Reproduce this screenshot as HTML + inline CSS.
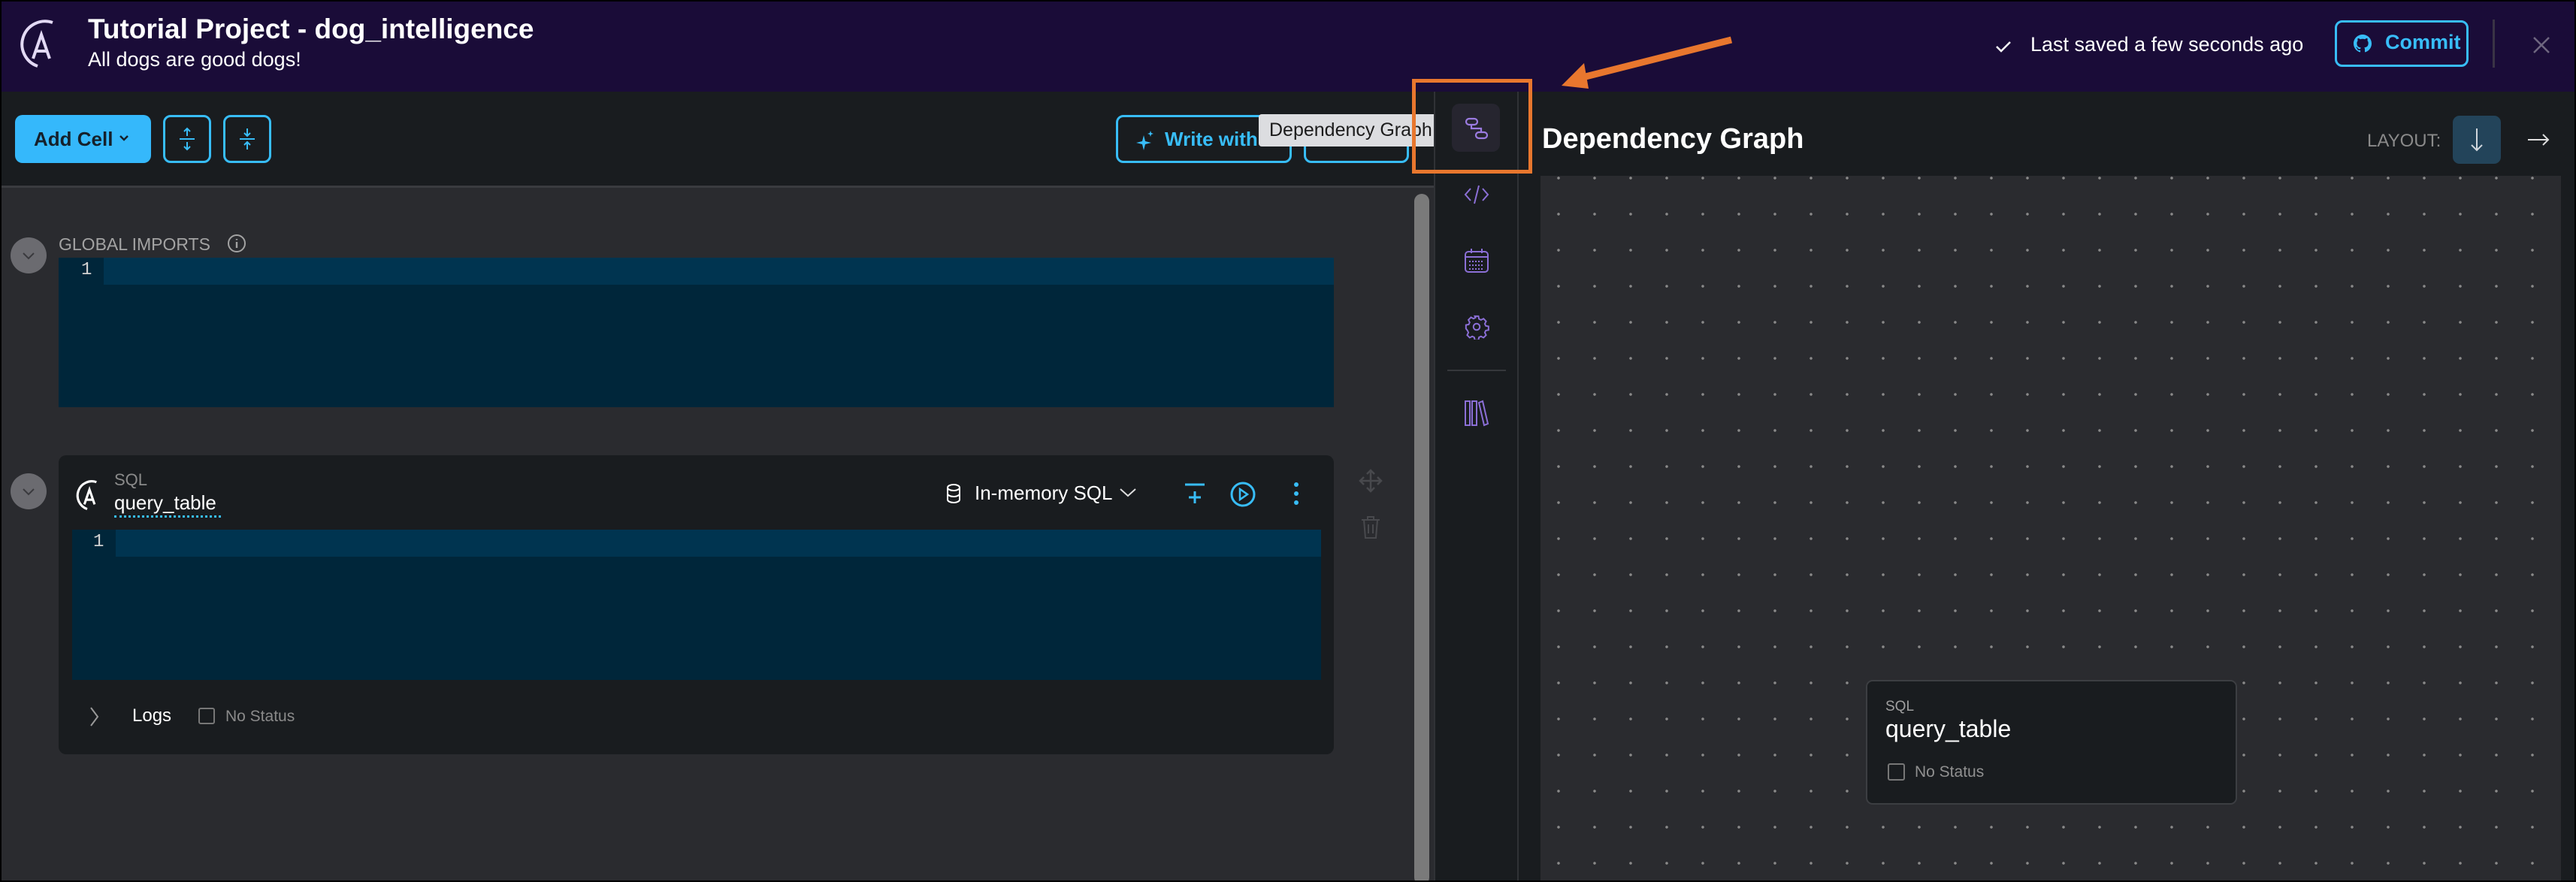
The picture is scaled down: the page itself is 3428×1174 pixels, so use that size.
<!DOCTYPE html>
<html><head><meta charset="utf-8"><style>
*{margin:0;padding:0;box-sizing:border-box}
html,body{width:3428px;height:1174px;overflow:hidden;background:#000;font-family:"Liberation Sans",sans-serif}
#root{position:absolute;left:2px;top:2px;width:3424px;height:1170px;background:#2a2b2f;overflow:hidden}
.a{position:absolute}
.t{position:absolute;white-space:nowrap}
</style></head><body>
<div id="root">
<!-- header -->
<div class="a" style="left:0;top:0;width:3424px;height:120px;background:#1a0c38"></div>
<svg class="a" style="left:20px;top:22px" width="56" height="68" viewBox="0 0 56 68">
<path d="M48 6 A28 28 0 1 0 28 64" fill="none" stroke="#e3d9f5" stroke-width="4"/>
<path d="M22 54 L33 22 L44 54 M25 44 L41 44" fill="none" stroke="#e3d9f5" stroke-width="4"/>
</svg>
<div class="t" style="left:115px;top:16px;font-size:37px;font-weight:bold;color:#fff">Tutorial Project - dog_intelligence</div>
<div class="t" style="left:115px;top:62px;font-size:27px;color:#fff">All dogs are good dogs!</div>
<svg class="a" style="left:2652px;top:50px" width="24" height="20"><path d="M3 10 L9 16 L21 4" fill="none" stroke="#fff" stroke-width="2.5"/></svg>
<div class="t" style="left:2700px;top:42px;font-size:27px;color:#fff">Last saved a few seconds ago</div>
<div class="a" style="left:3105px;top:25px;width:178px;height:62px;border:3px solid #38bdf8;border-radius:10px"></div>
<svg class="a" style="left:3130px;top:44px" width="24" height="24" viewBox="0 0 16 16"><path fill="#38bdf8" d="M8 0C3.58 0 0 3.58 0 8c0 3.54 2.29 6.53 5.47 7.59.4.07.55-.17.55-.38v-1.33c-2.23.48-2.7-1.07-2.7-1.07-.36-.92-.89-1.17-.89-1.17-.73-.5.06-.49.06-.49.8.06 1.23.83 1.23.83.72 1.23 1.88.87 2.34.67.07-.52.28-.87.51-1.07-1.78-.2-3.65-.89-3.65-3.95 0-.87.31-1.59.82-2.15-.08-.2-.36-1.02.08-2.12 0 0 .67-.21 2.2.82A7.6 7.6 0 0 1 8 3.86c.68 0 1.36.09 2 .27 1.53-1.04 2.2-.82 2.2-.82.44 1.1.16 1.92.08 2.12.51.56.82 1.27.82 2.15 0 3.07-1.87 3.75-3.65 3.95.29.25.54.73.54 1.48v2.2c0 .21.15.46.55.38A8 8 0 0 0 16 8c0-4.42-3.58-8-8-8z"/></svg>
<div class="t" style="left:3172px;top:39px;font-size:27px;font-weight:bold;color:#38bdf8">Commit</div>
<div class="a" style="left:3315px;top:24px;width:3px;height:64px;background:#3a3445"></div>
<svg class="a" style="left:3364px;top:42px" width="32" height="32"><path d="M6 6 L26 26 M26 6 L6 26" stroke="#6e6680" stroke-width="2.5"/></svg>

<!-- toolbar -->
<div class="a" style="left:0;top:120px;width:1906px;height:125px;background:#191c1f"></div>
<div class="a" style="left:0;top:245px;width:1906px;height:3px;background:#3a3b3f"></div>
<div class="a" style="left:18px;top:151px;width:181px;height:64px;background:#35b8fb;border-radius:10px"></div>
<div class="t" style="left:43px;top:168px;font-size:26px;font-weight:bold;color:#15202b">Add Cell</div>
<svg class="a" style="left:155px;top:176px" width="16" height="12"><path d="M3 3 L8 8 L13 3" fill="none" stroke="#15202b" stroke-width="2.5"/></svg>
<div class="a" style="left:215px;top:151px;width:64px;height:64px;border:3px solid #38bdf8;border-radius:10px"></div>
<svg class="a" style="left:215px;top:151px" width="64" height="64"><path d="M22 32 H42 M32 18 V28 M28 22 L32 18 L36 22 M32 36 V46 M28 42 L32 46 L36 42" fill="none" stroke="#38bdf8" stroke-width="2"/></svg>
<div class="a" style="left:295px;top:151px;width:64px;height:64px;border:3px solid #38bdf8;border-radius:10px"></div>
<svg class="a" style="left:295px;top:151px" width="64" height="64"><path d="M22 32 H42 M32 18 V28 M28 24 L32 28 L36 24 M32 36 V46 M28 40 L32 36 L36 40" fill="none" stroke="#38bdf8" stroke-width="2"/></svg>
<div class="a" style="left:1483px;top:151px;width:234px;height:64px;border:3px solid #38bdf8;border-radius:10px"></div>
<svg class="a" style="left:1508px;top:170px" width="28" height="30"><path d="M12 8 L14 16 L22 18 L14 20 L12 28 L10 20 L2 18 L10 16Z M21 2 L22 5 L25 6 L22 7 L21 10 L20 7 L17 6 L20 5Z" fill="#38bdf8"/></svg>
<div class="t" style="left:1548px;top:168px;font-size:26px;font-weight:bold;color:#38bdf8">Write with AI</div>
<div class="a" style="left:1733px;top:151px;width:140px;height:64px;border:3px solid #38bdf8;border-radius:10px"></div>
<!-- tooltip -->
<div class="a" style="left:1673px;top:150px;width:244px;height:43px;background:#dcdde0;border-radius:4px"></div>
<div class="a" style="left:1916px;top:157px;width:0;height:0;border-top:14px solid transparent;border-bottom:14px solid transparent;border-left:15px solid #dcdde0"></div>
<div class="t" style="left:1687px;top:157px;font-size:25px;color:#1c1c1c">Dependency Graph</div>

<!-- notebook -->
<div class="a" style="left:1880px;top:256px;width:20px;height:920px;background:#7a7a7a;border-radius:10px"></div>
<div class="a" style="left:12px;top:314px;width:48px;height:48px;background:#6b6b70;border-radius:50%"></div>
<svg class="a" style="left:12px;top:314px" width="48" height="48"><path d="M17 21 L24 28 L31 21" fill="none" stroke="#3a3a3e" stroke-width="2"/></svg>
<div class="t" style="left:76px;top:310px;font-size:23px;color:#a3a3a3">GLOBAL IMPORTS</div>
<svg class="a" style="left:300px;top:309px" width="26" height="26"><circle cx="13" cy="13" r="11" fill="none" stroke="#a3a3a3" stroke-width="2"/><path d="M13 11 V19 M13 7 V8.5" stroke="#a3a3a3" stroke-width="2.4"/></svg>
<div class="a" style="left:76px;top:341px;width:1697px;height:199px;background:#00263a"></div>
<div class="a" style="left:136px;top:341px;width:1637px;height:36px;background:#003450"></div>
<div class="t" style="left:106px;top:344px;font-size:24px;color:#d0d0d0;font-family:'Liberation Mono',monospace">1</div>

<div class="a" style="left:12px;top:628px;width:48px;height:48px;background:#6b6b70;border-radius:50%"></div>
<svg class="a" style="left:12px;top:628px" width="48" height="48"><path d="M17 21 L24 28 L31 21" fill="none" stroke="#3a3a3e" stroke-width="2"/></svg>
<div class="a" style="left:76px;top:604px;width:1697px;height:398px;background:#191c1f;border-radius:10px"></div>
<svg class="a" style="left:94px;top:636px" width="40" height="42" viewBox="0 0 56 68"><path d="M48 6 A28 28 0 1 0 28 64" fill="none" stroke="#fff" stroke-width="5"/><path d="M22 54 L33 22 L44 54 M25 44 L41 44" fill="none" stroke="#fff" stroke-width="5"/></svg>
<div class="t" style="left:150px;top:624px;font-size:22px;color:#8a8a8a">SQL</div>
<div class="t" style="left:150px;top:652px;font-size:26px;color:#fff">query_table</div>
<div class="a" style="left:150px;top:684px;width:142px;border-top:3px dotted #38bdf8"></div>
<svg class="a" style="left:1254px;top:641px" width="26" height="28"><ellipse cx="13" cy="6" rx="8" ry="4" fill="none" stroke="#fff" stroke-width="2"/><path d="M5 6 V22 A8 4 0 0 0 21 22 V6 M5 14 A8 4 0 0 0 21 14" fill="none" stroke="#fff" stroke-width="2"/></svg>
<div class="t" style="left:1295px;top:639px;font-size:26px;color:#fff">In-memory SQL</div>
<svg class="a" style="left:1486px;top:646px" width="26" height="16"><path d="M3 3 L13 12 L23 3" fill="none" stroke="#ddd" stroke-width="2"/></svg>
<svg class="a" style="left:1572px;top:640px" width="32" height="30"><path d="M3 3 H29 M16 12 V28 M8 20 H24" stroke="#38bdf8" stroke-width="3"/></svg>
<svg class="a" style="left:1634px;top:638px" width="36" height="36"><circle cx="18" cy="18" r="15" fill="none" stroke="#38bdf8" stroke-width="3"/><path d="M14 11 L24 18 L14 25Z" fill="none" stroke="#38bdf8" stroke-width="2.5"/></svg>
<svg class="a" style="left:1716px;top:638px" width="14" height="36"><circle cx="7" cy="5" r="3" fill="#38bdf8"/><circle cx="7" cy="17" r="3" fill="#38bdf8"/><circle cx="7" cy="29" r="3" fill="#38bdf8"/></svg>
<div class="a" style="left:94px;top:703px;width:1662px;height:200px;background:#00263a"></div>
<div class="a" style="left:152px;top:703px;width:1604px;height:36px;background:#003450"></div>
<div class="t" style="left:122px;top:706px;font-size:24px;color:#d0d0d0;font-family:'Liberation Mono',monospace">1</div>
<svg class="a" style="left:116px;top:938px" width="16" height="28"><path d="M3 2 L12 14 L3 26" fill="none" stroke="#999" stroke-width="2"/></svg>
<div class="t" style="left:174px;top:937px;font-size:24px;color:#fff">Logs</div>
<div class="a" style="left:262px;top:940px;width:22px;height:22px;border:2px solid #777;border-radius:3px"></div>
<div class="t" style="left:298px;top:940px;font-size:21px;color:#8a8a8a">No Status</div>
<svg class="a" style="left:1806px;top:622px" width="32" height="32"><path d="M16 2 V30 M2 16 H30 M11 7 L16 2 L21 7 M11 25 L16 30 L21 25 M7 11 L2 16 L7 21 M25 11 L30 16 L25 21" fill="none" stroke="#48494d" stroke-width="2.5"/></svg>
<svg class="a" style="left:1808px;top:684px" width="28" height="32"><path d="M2 6 H26 M10 6 V2 H18 V6 M5 6 L7 30 H21 L23 6 M11 12 V24 M17 12 V24" fill="none" stroke="#48494d" stroke-width="2"/></svg>

<!-- sidebar -->
<div class="a" style="left:1906px;top:120px;width:113px;height:1054px;background:#191c1f;border-left:2px solid #303236;border-right:2px solid #303236"></div>
<div class="a" style="left:1930px;top:136px;width:64px;height:64px;background:#26252f;border-radius:10px"></div>
<svg class="a" style="left:1946px;top:152px" width="34" height="34"><rect x="3" y="4" width="15" height="8" rx="4" fill="none" stroke="#9b7be0" stroke-width="2.2"/><rect x="16" y="22" width="15" height="8" rx="4" fill="none" stroke="#9b7be0" stroke-width="2.2"/><path d="M10 12 V17 H23 V22" fill="none" stroke="#9b7be0" stroke-width="2.2"/></svg>
<svg class="a" style="left:1946px;top:240px" width="34" height="34"><path d="M9 9 L2 17 L9 25 M25 9 L32 17 L25 25 M20 5 L14 29" fill="none" stroke="#8b6fd6" stroke-width="2"/></svg>
<svg class="a" style="left:1946px;top:327px" width="34" height="36"><rect x="2" y="6" width="30" height="27" rx="4" fill="none" stroke="#8b6fd6" stroke-width="2"/><path d="M2 13 H32 M10 2 V8 M24 2 V8" stroke="#8b6fd6" stroke-width="2"/><path d="M7 19 H27 M7 24 H27 M7 29 H27" stroke="#8b6fd6" stroke-width="2" stroke-dasharray="2 2"/></svg>
<svg class="a" style="left:1946px;top:416px" width="34" height="34" viewBox="0 0 24 24"><path fill="none" stroke="#8b6fd6" stroke-width="1.4" d="M10.3 2h3.4l.5 2.6 1.9 1 2.4-1.2 2.4 2.4-1.2 2.4.9 1.9 2.6.5v3.4l-2.6.5-.9 1.9 1.2 2.4-2.4 2.4-2.4-1.2-1.9.9-.5 2.6h-3.4l-.5-2.6-1.9-.9-2.4 1.2-2.4-2.4 1.2-2.4-.9-1.9L2 13.7v-3.4l2.6-.5.9-1.9-1.2-2.4 2.4-2.4 2.4 1.2 1.9-1z"/><circle cx="12" cy="12" r="3" fill="none" stroke="#8b6fd6" stroke-width="1.4"/></svg>
<div class="a" style="left:1924px;top:490px;width:78px;height:2px;background:#35373b"></div>
<svg class="a" style="left:1946px;top:530px" width="34" height="36"><rect x="2" y="2" width="6" height="32" fill="none" stroke="#8b6fd6" stroke-width="2"/><rect x="11" y="2" width="6" height="32" fill="none" stroke="#8b6fd6" stroke-width="2"/><path d="M20 4 L25 2 L32 32 L27 34Z" fill="none" stroke="#8b6fd6" stroke-width="2"/></svg>

<!-- right panel -->
<div class="a" style="left:2019px;top:120px;width:1405px;height:1054px;background:#191c1f"></div>
<div class="t" style="left:2050px;top:162px;font-size:38px;font-weight:bold;color:#fff">Dependency Graph</div>
<div class="t" style="left:3148px;top:172px;font-size:24px;color:#8a8a8a">LAYOUT:</div>
<div class="a" style="left:3262px;top:152px;width:64px;height:64px;background:#23445a;border-radius:9px"></div>
<svg class="a" style="left:3282px;top:166px" width="24" height="36"><path d="M12 3 V32 M5 25 L12 32 L19 25" fill="none" stroke="#cfd6dc" stroke-width="2"/></svg>
<svg class="a" style="left:3360px;top:172px" width="32" height="24"><path d="M2 12 H29 M22 5 L29 12 L22 19" fill="none" stroke="#ddd" stroke-width="2"/></svg>
<div class="a" style="left:2048px;top:232px;width:1358px;height:942px;background-color:#2a2b2f;background-image:radial-gradient(circle,#8a8a8a 1.6px,transparent 2px);background-size:48px 48px;background-position:0px -21px"></div>
<div class="a" style="left:2481px;top:903px;width:494px;height:166px;background:#191c1f;border:2px solid #3c3e42;border-radius:9px"></div>
<div class="t" style="left:2507px;top:928px;font-size:19px;color:#a0a0a0">SQL</div>
<div class="t" style="left:2507px;top:950px;font-size:32px;color:#fff">query_table</div>
<div class="a" style="left:2510px;top:1014px;width:23px;height:23px;border:2px solid #777;border-radius:3px"></div>
<div class="t" style="left:2546px;top:1014px;font-size:21px;color:#909090">No Status</div>

<!-- annotation -->
<div class="a" style="left:1877px;top:103px;width:160px;height:126px;border:5px solid #e8772e"></div>
<svg class="a" style="left:2060px;top:40px" width="250" height="100"><path d="M242 11 L40 62" stroke="#e8772e" stroke-width="9"/><path d="M16 72 L46 42 L52 76Z" fill="#e8772e"/></svg>
</div>
</body></html>
